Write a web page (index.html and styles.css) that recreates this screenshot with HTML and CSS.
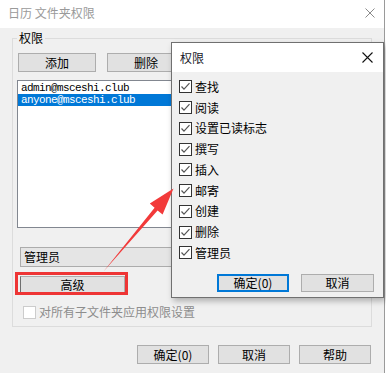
FILE: index.html
```html
<!DOCTYPE html>
<html lang="zh-CN">
<head>
<meta charset="utf-8">
<title>日历 文件夹权限</title>
<link rel="stylesheet" href="styles.css">
</head>
<body>
<div class="window">
  <div class="titlebar">
    <span class="title">日历 文件夹权限</span>
    <svg class="win-close" width="10" height="10" viewBox="0 0 10 10"><path d="M0.5 0.5L9.5 9.5M9.5 0.5L0.5 9.5" stroke="#8a8a8a" stroke-width="1" fill="none"/></svg>
  </div>
  <div class="client">
    <div class="group">
      <span class="legend">权限</span>
      <div class="btnrow">
        <div class="btn btn-add">添加</div>
        <div class="btn btn-add">删除</div>
      </div>
      <div class="list">
        <div class="item">admin@msceshi.club</div>
        <div class="item sel">anyone@msceshi.club</div>
      </div>
      <div class="combo">管理员</div>
      <div class="adv-wrap"><div class="btn adv">高级</div></div>
      <div class="chk disabled"><span class="box"></span><span>对所有子文件夹应用权限设置</span></div>
    </div>
    <div class="footer">
      <div class="btn fbtn">确定(0)</div>
      <div class="btn fbtn">取消</div>
      <div class="btn fbtn">帮助</div>
    </div>
  </div>

  <div class="popup">
    <div class="ptitle">
      <span>权限</span>
      <svg class="pclose" width="11" height="11" viewBox="0 0 11 11"><path d="M0.5 0.5L10.5 10.5M10.5 0.5L0.5 10.5" stroke="#111" stroke-width="1.1" fill="none"/></svg>
    </div>
    <div class="pbody">
      <div class="prow"><span class="cb"><svg width="13" height="13" viewBox="0 0 13 13"><polyline points="2.5,6.5 5,9.2 10.5,3.2" fill="none" stroke="#555" stroke-width="1.2"/></svg></span>查找</div>
      <div class="prow"><span class="cb"><svg width="13" height="13" viewBox="0 0 13 13"><polyline points="2.5,6.5 5,9.2 10.5,3.2" fill="none" stroke="#555" stroke-width="1.2"/></svg></span>阅读</div>
      <div class="prow"><span class="cb"><svg width="13" height="13" viewBox="0 0 13 13"><polyline points="2.5,6.5 5,9.2 10.5,3.2" fill="none" stroke="#555" stroke-width="1.2"/></svg></span>设置已读标志</div>
      <div class="prow"><span class="cb"><svg width="13" height="13" viewBox="0 0 13 13"><polyline points="2.5,6.5 5,9.2 10.5,3.2" fill="none" stroke="#555" stroke-width="1.2"/></svg></span>撰写</div>
      <div class="prow"><span class="cb"><svg width="13" height="13" viewBox="0 0 13 13"><polyline points="2.5,6.5 5,9.2 10.5,3.2" fill="none" stroke="#555" stroke-width="1.2"/></svg></span>插入</div>
      <div class="prow"><span class="cb"><svg width="13" height="13" viewBox="0 0 13 13"><polyline points="2.5,6.5 5,9.2 10.5,3.2" fill="none" stroke="#555" stroke-width="1.2"/></svg></span>邮寄</div>
      <div class="prow"><span class="cb"><svg width="13" height="13" viewBox="0 0 13 13"><polyline points="2.5,6.5 5,9.2 10.5,3.2" fill="none" stroke="#555" stroke-width="1.2"/></svg></span>创建</div>
      <div class="prow"><span class="cb"><svg width="13" height="13" viewBox="0 0 13 13"><polyline points="2.5,6.5 5,9.2 10.5,3.2" fill="none" stroke="#555" stroke-width="1.2"/></svg></span>删除</div>
      <div class="prow"><span class="cb"><svg width="13" height="13" viewBox="0 0 13 13"><polyline points="2.5,6.5 5,9.2 10.5,3.2" fill="none" stroke="#555" stroke-width="1.2"/></svg></span>管理员</div>
      <div class="pfooter">
        <div class="btn pbtn default">确定(0)</div>
        <div class="btn pbtn">取消</div>
      </div>
    </div>
  </div>

  <svg class="arrow" width="386" height="373" viewBox="0 0 386 373">
    <polygon points="103.5,271.5 157.6,210.4 162.6,214.4 173.5,188.5 149.8,203.6 154.6,207.8" fill="#f23a3a"/>
  </svg>
</div>
</body>
</html>
```

FILE: styles.css
```css
html, body {
  margin: 0;
  padding: 0;
}
body {
  width: 386px;
  height: 373px;
  overflow: hidden;
  background: #ffffff;
  font-family: "Noto Sans CJK SC", "Noto Sans", sans-serif;
  font-size: 12px;
  color: #000;
}
.window {
  position: relative;
  width: 385px;
  height: 373px;
  box-sizing: border-box;
  border-right: 1px solid #9a9a9a;
  background: #f0f0f0;
}
.titlebar {
  height: 28px;
  background: #ffffff;
  display: flex;
  align-items: center;
  justify-content: space-between;
  padding: 0 9px 2px 8px;
  box-sizing: border-box;
}
.title {
  color: #9a9a9a;
  line-height: 14px;
}
.client {
  display: flex;
  flex-direction: column;
}
.group {
  position: relative;
  margin: 10px 0 0 12px;
  width: 360px;
  height: 289px;
  box-sizing: border-box;
  border: 1px solid #dcdcdc;
  padding-top: 14px;
  display: flex;
  flex-direction: column;
  align-items: flex-start;
}
.legend {
  position: absolute;
  left: 4px;
  top: -8px;
  padding: 0 2px;
  line-height: 14px;
  background: #f0f0f0;
}
.btn {
  box-sizing: border-box;
  background: #e1e1e1;
  border: 1px solid #adadad;
  display: flex;
  align-items: center;
  justify-content: center;
  line-height: 14px;
}
.btnrow {
  display: flex;
  gap: 11px;
  margin-left: 5px;
}
.btn-add {
  width: 78px;
  height: 19px;
}
.list {
  margin: 8px 0 0 4px;
  width: 350px;
  height: 148px;
  box-sizing: border-box;
  border: 1px solid #828790;
  background: #ffffff;
  padding-top: 1px;
}
.item {
  height: 12px;
  line-height: 12px;
  padding-left: 3px;
  font-family: "Liberation Mono", "DejaVu Sans Mono", monospace;
  font-size: 11px;
  letter-spacing: -0.6px;
}
.item.sel {
  background: #0078d7;
  color: #ffffff;
}
.combo {
  margin: 19px 0 0 7px;
  width: 346px;
  height: 20px;
  box-sizing: border-box;
  border: 1px solid #acacac;
  background: #e5e5e5;
  padding-left: 3px;
  display: flex;
  align-items: center;
  line-height: 14px;
}
.adv-wrap {
  position: relative;
  margin: 9px 0 0 7px;
}
.adv-wrap::after {
  content: "";
  position: absolute;
  left: -5px;
  top: -4px;
  right: -3px;
  bottom: -2px;
  border: 3px solid #ee3535;
}
.adv {
  width: 105px;
  height: 17px;
  border-left-color: #6f6f6f;
}
.chk {
  margin: 12px 0 0 10px;
  display: flex;
  align-items: center;
  gap: 3px;
  line-height: 14px;
}
.chk .box {
  width: 13px;
  height: 13px;
  box-sizing: border-box;
  border: 1px solid #cccccc;
  background: #ffffff;
}
.chk.disabled {
  color: #8d8d8d;
}
.footer {
  display: flex;
  justify-content: flex-end;
  gap: 9px;
  margin-top: 18px;
  padding-right: 13px;
}
.fbtn {
  width: 72px;
  height: 19px;
}

/* popup dialog */
.popup {
  position: absolute;
  left: 171px;
  top: 42px;
  width: 213px;
  height: 256px;
  box-sizing: border-box;
  border: 1px solid #707070;
  background: #f0f0f0;
  box-shadow: 2px 3px 6px rgba(0, 0, 0, 0.28);
  display: flex;
  flex-direction: column;
}
.ptitle {
  height: 29px;
  background: #ffffff;
  display: flex;
  align-items: center;
  justify-content: space-between;
  padding: 0 10px 0 8px;
  line-height: 14px;
  color: #1a1a2a;
}
.pbody {
  padding: 4.6px 0 0 7px;
  display: flex;
  flex-direction: column;
}
.prow {
  height: 20.75px;
  display: flex;
  align-items: center;
  gap: 3px;
  line-height: 14px;
}
.cb {
  width: 13px;
  height: 13px;
  box-sizing: border-box;
  border: 1px solid #333333;
  background: #ffffff;
  position: relative;
}
.cb svg {
  display: block;
  margin: -1px;
}
.pfooter {
  display: flex;
  justify-content: flex-end;
  gap: 12px;
  margin-top: 10.5px;
  padding-right: 9px;
}
.pbtn {
  width: 73px;
  height: 18px;
}
.pbtn.default {
  width: 72px;
  border: 2px solid #0078d7;
}
.arrow {
  position: absolute;
  left: 0;
  top: 0;
  pointer-events: none;
}
```
